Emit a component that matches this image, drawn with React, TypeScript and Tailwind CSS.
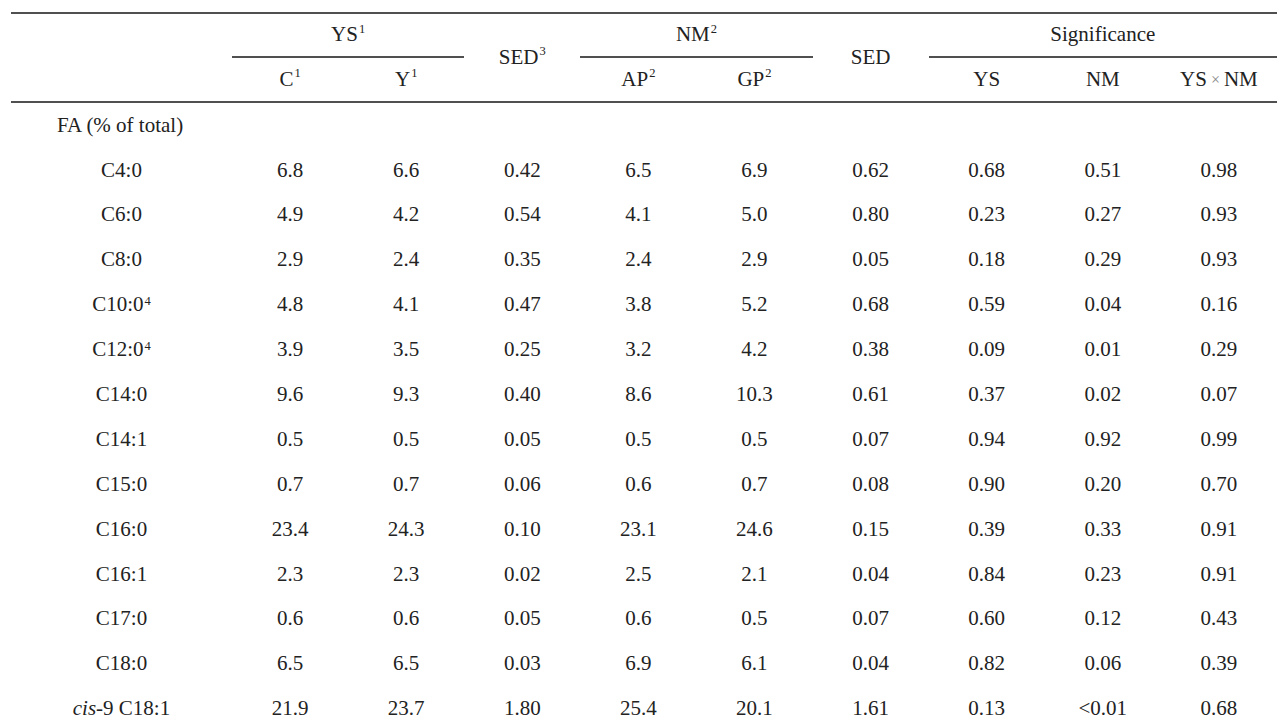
import type { ReactNode } from "react";

type Row = {
  label: ReactNode;
  values: string[];
};

const Sup = ({ children }: { children: ReactNode }) => (
  <span className="relative -top-[6px] ml-px text-[12.5px]">{children}</span>
);

const rows: Row[] = [
  { label: "C4:0", values: ["6.8", "6.6", "0.42", "6.5", "6.9", "0.62", "0.68", "0.51", "0.98"] },
  { label: "C6:0", values: ["4.9", "4.2", "0.54", "4.1", "5.0", "0.80", "0.23", "0.27", "0.93"] },
  { label: "C8:0", values: ["2.9", "2.4", "0.35", "2.4", "2.9", "0.05", "0.18", "0.29", "0.93"] },
  {
    label: (
      <>
        C10:0<Sup>4</Sup>
      </>
    ),
    values: ["4.8", "4.1", "0.47", "3.8", "5.2", "0.68", "0.59", "0.04", "0.16"],
  },
  {
    label: (
      <>
        C12:0<Sup>4</Sup>
      </>
    ),
    values: ["3.9", "3.5", "0.25", "3.2", "4.2", "0.38", "0.09", "0.01", "0.29"],
  },
  { label: "C14:0", values: ["9.6", "9.3", "0.40", "8.6", "10.3", "0.61", "0.37", "0.02", "0.07"] },
  { label: "C14:1", values: ["0.5", "0.5", "0.05", "0.5", "0.5", "0.07", "0.94", "0.92", "0.99"] },
  { label: "C15:0", values: ["0.7", "0.7", "0.06", "0.6", "0.7", "0.08", "0.90", "0.20", "0.70"] },
  { label: "C16:0", values: ["23.4", "24.3", "0.10", "23.1", "24.6", "0.15", "0.39", "0.33", "0.91"] },
  { label: "C16:1", values: ["2.3", "2.3", "0.02", "2.5", "2.1", "0.04", "0.84", "0.23", "0.91"] },
  { label: "C17:0", values: ["0.6", "0.6", "0.05", "0.6", "0.5", "0.07", "0.60", "0.12", "0.43"] },
  { label: "C18:0", values: ["6.5", "6.5", "0.03", "6.9", "6.1", "0.04", "0.82", "0.06", "0.39"] },
  {
    label: (
      <>
        <i>cis</i>-9 C18:1
      </>
    ),
    values: ["21.9", "23.7", "1.80", "25.4", "20.1", "1.61", "0.13", "<0.01", "0.68"],
  },
];

const cols = "grid grid-cols-[221px_repeat(9,minmax(0,1fr))]";

export default function App() {
  return (
    <div
      className="h-[728px] w-full overflow-hidden bg-white pt-[12px] text-[21px] text-[#222]"
      style={{ fontFamily: '"Liberation Serif", "Times New Roman", serif' }}
    >
      <div className="ml-[11px] w-[1266px]">
        {/* Header */}
        <div className={`${cols} grid-rows-[44px_43px] border-y-2 border-[#505050]`}>
          <div className="row-span-2" />
          <div className="col-span-2 flex items-center justify-center border-b-2 border-[#505050]">
            YS<Sup>1</Sup>
          </div>
          <div className="row-span-2 flex items-center justify-center">
            SED<Sup>3</Sup>
          </div>
          <div className="col-span-2 flex items-center justify-center border-b-2 border-[#505050]">
            NM<Sup>2</Sup>
          </div>
          <div className="row-span-2 flex items-center justify-center">SED</div>
          <div className="col-span-3 flex items-center justify-center border-b-2 border-[#505050]">
            Significance
          </div>

          <div className="flex items-center justify-center">
            C<Sup>1</Sup>
          </div>
          <div className="flex items-center justify-center">
            Y<Sup>1</Sup>
          </div>
          <div className="flex items-center justify-center">
            AP<Sup>2</Sup>
          </div>
          <div className="flex items-center justify-center">
            GP<Sup>2</Sup>
          </div>
          <div className="flex items-center justify-center">YS</div>
          <div className="flex items-center justify-center">NM</div>
          <div className="flex items-center justify-center">
            YS <span className="mx-[4px] text-[16px] text-[#888]">×</span> NM
          </div>
        </div>

        {/* Body */}
        <div className="flex h-[44.9px] items-center pl-[46px]">FA (% of total)</div>
        {rows.map((row, i) => (
          <div key={i} className={`${cols} h-[44.9px] items-center text-center`}>
            <div>{row.label}</div>
            {row.values.map((v, j) => (
              <div key={j}>{v}</div>
            ))}
          </div>
        ))}
      </div>
    </div>
  );
}
